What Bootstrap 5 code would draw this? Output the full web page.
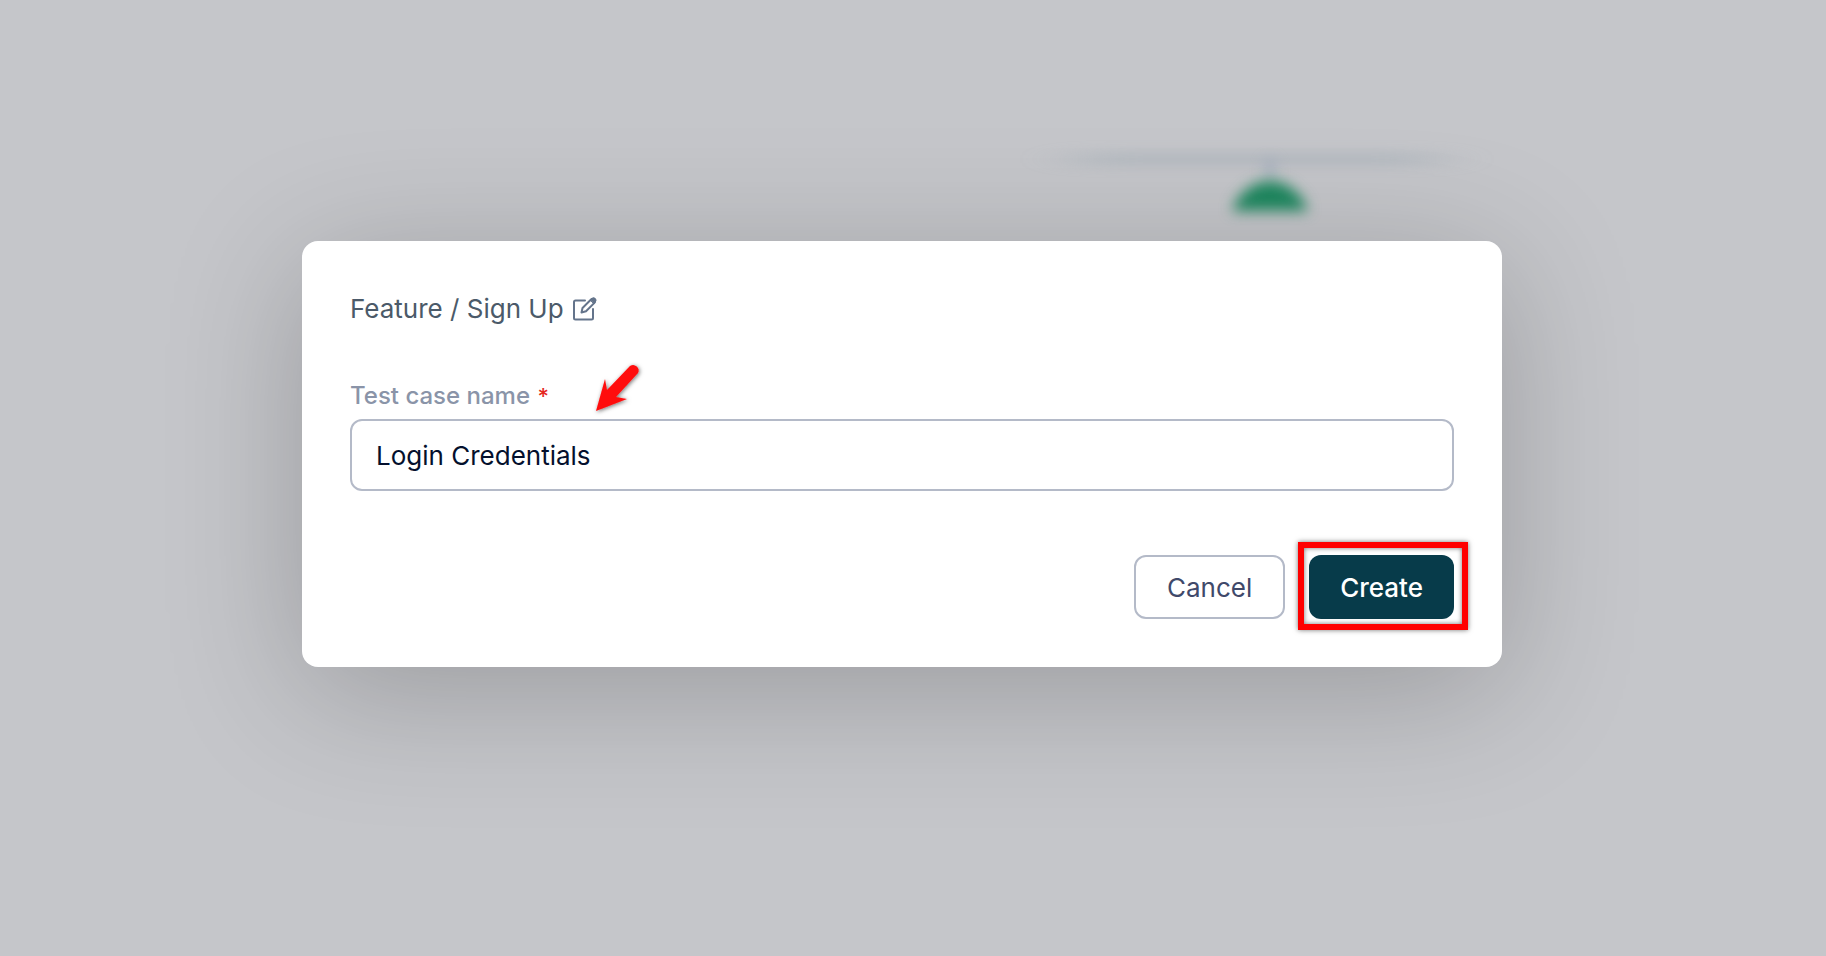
<!DOCTYPE html>
<html lang="en">
<head>
<meta charset="utf-8">
<meta name="viewport" content="width=device-width, initial-scale=1">
<title>Create test case</title>
<link href="https://cdn.jsdelivr.net/npm/bootstrap@5.3.0/dist/css/bootstrap.min.css" rel="stylesheet">
<style>
  body { font-family: Inter, "Liberation Sans", sans-serif; background: #c5c6ca; }
  .stage { padding: 0 22px 48px 0; }
  .map-behind { left: calc(50% + 107px); top: 130px; z-index: 0; }
  .case-dialog {
    z-index: 1; width: 100%; max-width: 1200px; padding: 48px;
    background: #fff; border-radius: 16px;
    box-shadow: 0 24px 136px rgba(0, 0, 0, .22);
  }
  .crumb { gap: 5px; font-size: 26px; line-height: 40px; color: #4b5a69; margin-bottom: 48px; }
  .edit-btn { line-height: 0; color: #64748b; }
  .case-label { padding-top: 1px; font-size: 24px; line-height: 36px; font-weight: 500; color: #8a94a8; margin-bottom: 5px; }
  .req { margin-left: 1px; font-size: 22px; line-height: 20px; color: #e5281e; }
  .case-input {
    height: 72px; padding: 0 24px; font-size: 26px; color: #04102d;
    border: 2px solid #b4bac8; border-radius: 12px;
  }
  .actions { gap: 24px; margin-top: 64px; }
  .act { height: 64px; padding: 2px 31px 0; font-size: 26px; line-height: 32px; border: 2px solid #b4bac8; border-radius: 12px; color: #40496a; }
  .act-main { background: #073b4a; border: 0; color: #fff; font-weight: 500; }
  .callout-box {
    top: -13px; right: -14px; bottom: -11px; left: -11px; border: 6px solid #f00;
    box-shadow: 0 0 5px rgba(0, 0, 0, .55), inset 0 0 5px rgba(0, 0, 0, .55); pointer-events: none;
  }
  .callout-arrow { left: 238px; bottom: -4px; pointer-events: none; }
</style>
</head>
<body>
<main class="stage position-relative min-vh-100 d-flex align-items-center justify-content-center overflow-hidden">
  <svg class="map-behind position-absolute" width="500" height="110" viewBox="0 0 500 110" aria-hidden="true">
    <defs>
      <filter id="soft" filterUnits="userSpaceOnUse" x="150" y="0" width="200" height="110" color-interpolation-filters="sRGB"><feGaussianBlur stdDeviation="7"/></filter>
      <filter id="haze" filterUnits="userSpaceOnUse" x="0" y="0" width="500" height="70" color-interpolation-filters="sRGB"><feGaussianBlur stdDeviation="28 7"/></filter>
    </defs>
    <rect x="56" y="25" width="362" height="8" fill="#94a3ae" opacity=".55" filter="url(#haze)"/>
    <rect x="244" y="30" width="12" height="18" fill="#94a3b8" opacity=".5" filter="url(#soft)"/>
    <path d="M212 81C218 63 234 51 250 51S282 63 288 81Z" fill="#1f8860" filter="url(#soft)"/>
  </svg>

  <form class="case-dialog position-relative" role="dialog" aria-label="Create test case">
    <div class="crumb d-flex align-items-center">
      <span>Feature / Sign Up</span>
      <button type="button" class="edit-btn btn p-0 border-0" aria-label="Edit feature">
        <svg width="32" height="32" viewBox="0 0 32 32" fill="none" stroke="currentColor" stroke-width="2" stroke-linejoin="round" stroke-linecap="round">
          <path d="M16 7.500H6.500Q5 7.500 5 9V25Q5 26.500 6.500 26.500H22.500Q24 26.500 24 25V16"/>
          <path d="M12.500 19.500l1-4.500L22 6.500a2.200 2.200 0 0 1 3.400 3.400L17 18.300z"/>
          <path d="M21.500 7l1.500-1.500a2.100 2.100 0 0 1 3.300 3.300L25 10.500z" fill="currentColor" stroke-width="1"/>
        </svg>
      </button>
    </div>

    <div class="position-relative">
      <label for="caseName" class="case-label d-block">Test case name <span class="req">*</span></label>
      <svg class="callout-arrow position-absolute" width="60" height="60" viewBox="0 0 60 60" aria-hidden="true">
        <defs><filter id="drop" x="-20%" y="-20%" width="150%" height="150%"><feDropShadow dx="1" dy="1" stdDeviation="2" flood-opacity=".55"/></filter></defs>
        <path d="M8 53L17 21L19 32L42 8A5.500 5.500 0 0 1 50 15L28 39L39 41Z" fill="#ff0c0c" filter="url(#drop)"/>
      </svg>
    </div>
    <input id="caseName" type="text" class="case-input form-control" value="Login Credentials">

    <div class="actions d-flex justify-content-end">
      <button type="button" class="act btn">Cancel</button>
      <div class="position-relative">
        <button type="submit" class="act act-main btn">Create</button>
        <div class="callout-box position-absolute"></div>
      </div>
    </div>
  </form>
</main>
<script src="https://cdn.jsdelivr.net/npm/bootstrap@5.3.0/dist/js/bootstrap.bundle.min.js"></script>
</body>
</html>
